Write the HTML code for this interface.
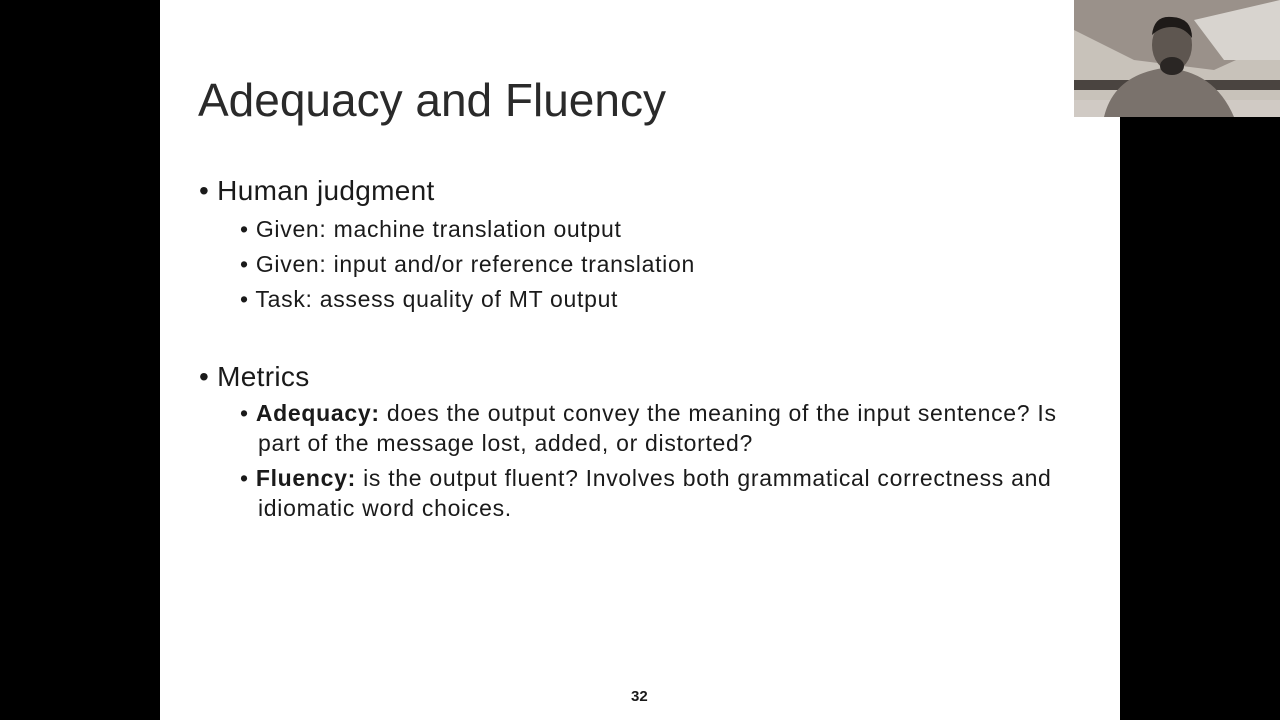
<!DOCTYPE html>
<html><head><style>
body{margin:0;width:1280px;height:720px;background:#000;position:relative;overflow:hidden;font-family:"Liberation Sans",sans-serif;color:#1a1a1a}
.slide{position:absolute;left:160px;top:0;width:960px;height:720px;background:#fff}
.t{position:absolute;white-space:nowrap}
h1{position:absolute;left:198px;top:73px;margin:0;font-weight:normal;font-size:46px;color:#2a2a2a}
.l1{font-size:28px;letter-spacing:0.3px}
.l2{font-size:23px;letter-spacing:0.7px}
.cam{position:absolute;left:1074px;top:0;width:206px;height:117px;background:#b9b2aa;overflow:hidden}
</style></head><body>
<div class="slide"></div>
<h1>Adequacy and Fluency</h1>
<div class="t l1" style="left:199px;top:175px">• Human judgment</div>
<div class="t l2" style="left:240px;top:216px">• Given: machine translation output</div>
<div class="t l2" style="left:240px;top:251px">• Given: input and/or reference translation</div>
<div class="t l2" style="left:240px;top:286px">• Task: assess quality of MT output</div>
<div class="t l1" style="left:199px;top:361px">• Metrics</div>
<div class="t l2" style="left:240px;top:400px">• <b>Adequacy:</b> does the output convey the meaning of the input sentence? Is</div>
<div class="t l2" style="left:258px;top:430px">part of the message lost, added, or distorted?</div>
<div class="t l2" style="left:240px;top:465px">• <b>Fluency:</b> is the output fluent? Involves both grammatical correctness and</div>
<div class="t l2" style="left:258px;top:495px">idiomatic word choices.</div>
<div class="t" style="left:631px;top:688px;font-size:15px;font-weight:bold">32</div>
<div class="cam">
<svg width="206" height="117">
<rect width="206" height="117" fill="#c8c2ba"/>
<polygon points="0,0 206,0 206,40 140,70 60,60 0,30" fill="#9a918a"/>
<polygon points="120,20 206,0 206,60 150,60" fill="#d8d4cf"/>
<rect x="0" y="80" width="206" height="10" fill="#4a4440"/>
<rect x="0" y="100" width="206" height="17" fill="#d0cac4"/>
<path d="M30,117 Q40,75 90,68 Q140,70 160,117Z" fill="#7a726c"/>
<ellipse cx="98" cy="45" rx="20" ry="26" fill="#5e5650"/>
<path d="M78,35 Q80,15 98,17 Q118,18 118,38 Q110,27 98,27 Q86,27 78,35Z" fill="#1e1a18"/>
<ellipse cx="98" cy="66" rx="12" ry="9" fill="#2a2624"/>
</svg>
</div>
</body></html>
